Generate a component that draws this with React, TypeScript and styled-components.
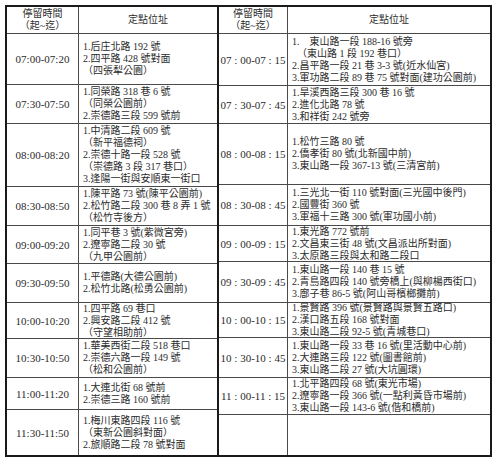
import styled, { createGlobalStyle } from 'styled-components'

type Stop = {
  time: string
  lines: string[]
}

const GlobalStyle = createGlobalStyle`
  html, body {
    margin: 0;
    padding: 0;
    background: #fff;
  }
  body {
    font-family: 'Liberation Serif', 'Noto Sans CJK TC', serif;
    color: #2b2b2b;
  }
`

const Page = styled.div`
  padding: 5px;
`

const Frame = styled.div`
  display: flex;
  width: 487px;
  box-sizing: border-box;
  border: 2px solid #1a1a1a;
`

const Side = styled.div<{ $cols: string; $rows: number[]; $divider?: boolean }>`
  display: grid;
  grid-template-columns: ${({ $cols }) => $cols};
  grid-template-rows: ${({ $rows }) => $rows.map(r => `${r}px`).join(' ')};
  gap: 1px;
  background: #4a4a4a;
  border-right: ${({ $divider }) => ($divider ? '2px solid #1a1a1a' : 'none')};
`

const Cell = styled.div`
  background: #fff;
  display: flex;
  flex-direction: column;
  justify-content: center;
  font-size: 10px;
  line-height: 12px;
  min-width: 0;
  white-space: nowrap;
`

const HeadCell = styled(Cell)`
  align-items: center;
  text-align: center;
`

const TimeCell = styled(Cell)`
  align-items: center;
  font-size: 11px;
`

const AddrCell = styled(Cell)`
  padding: 0 4px;
`

const Line = styled.div``

const leftStops: Stop[] = [
  { time: '07:00-07:20', lines: ['1.后庄北路 192 號', '2.四平路 428 號對面', '（四張犁公園）'] },
  { time: '07:30-07:50', lines: ['1.同榮路 318 巷 6 號', '（同榮公園前）', '2.崇德路三段 599 號前'] },
  {
    time: '08:00-08:20',
    lines: ['1.中清路二段 609 號', '（新平福德祠）', '2.崇德十路一段 528 號', '（崇德路 3 段 317 巷口）', '3.逢陽一街與安順東一街口'],
  },
  { time: '08:30-08:50', lines: ['1.陳平路 73 號(陳平公園前)', '2.松竹路二段 300 巷 8 弄 1 號', '（松竹寺後方）'] },
  { time: '09:00-09:20', lines: ['1.同平巷 3 號(紫微宮旁)', '2.遼寧路二段 30 號', '（九甲公園前）'] },
  { time: '09:30-09:50', lines: ['1.平德路(大德公園前)', '2.松竹北路(松勇公園前)'] },
  { time: '10:00-10:20', lines: ['1.四平路 69 巷口', '2.興安路二段 412 號', '（守望相助前）'] },
  { time: '10:30-10:50', lines: ['1.華美西街二段 518 巷口', '2.崇德六路一段 149 號', '（松和公園前）'] },
  { time: '11:00-11:20', lines: ['1.大連北街 68 號前', '2.崇德三路 160 號前'] },
  { time: '11:30-11:50', lines: ['1.梅川東路四段 116 號', '（東新公園斜對面）', '2.旅順路二段 78 號對面'] },
]

const rightStops: Stop[] = [
  {
    time: '07 : 00-07 : 15',
    lines: ['1.\u3000東山路一段 188-16 號旁', '\u2002（東山路 1 段 192 巷口）', '2.昌平路一段 21 巷 3-3 號(近水仙宮)', '3.軍功路二段 89 巷 75 號對面(建功公園前)'],
  },
  { time: '07 : 30-07 : 45', lines: ['1.旱溪西路三段 300 巷 16 號', '2.進化北路 78 號', '3.和祥街 242 號旁'] },
  { time: '08 : 00-08 : 15', lines: ['1.松竹三路 80 號', '2.僑孝街 80 號(北新國中前)', '3.東山路一段 367-13 號(三清宮前)'] },
  { time: '08 : 30-08 : 45', lines: ['1.三光北一街 110 號對面(三光國中後門)', '2.國豐街 360 號', '3.軍福十三路 300 號(軍功國小前)'] },
  { time: '09 : 00-09 : 15', lines: ['1.東光路 772 號前', '2.文昌東三街 48 號(文昌派出所對面)', '3.太原路三段與太和路二段口'] },
  { time: '09 : 30-09 : 45', lines: ['1.東山路一段 140 巷 15 號', '2.青島路四段 140 號旁橋上(與柳楊西街口)', '3.廍子巷 86-5 號(阿山哥檳榔攤前)'] },
  { time: '10 : 00-10 : 15', lines: ['1.景賢路 396 號(景賢路與景賢五路口)', '2.漢口路五段 168 號對面', '3.東山路二段 92-5 號(青城巷口)'] },
  { time: '10 : 30-10 : 45', lines: ['1.東山路一段 33 巷 16 號(里活動中心前)', '2.大連路三段 122 號(圖書館前)', '3.東山路二段 27 號(大坑圓環)'] },
  { time: '11 : 00-11 : 15', lines: ['1.北平路四段 68 號(東光市場)', '2.遼寧路一段 366 號(一點利黃昏市場前)', '3.東山路一段 143-6 號(偕和橋前)'] },
  { time: '', lines: [] },
]

// row heights measured off the scan; the two halves are separate tables
const leftRows = [26, 50, 38, 62, 38, 37, 38, 35, 38, 31, 45]
const rightRows = [26, 51, 37, 60, 40, 35, 40, 34, 39, 36, 40]

function Half({ stops, rows, cols, divider }: { stops: Stop[]; rows: number[]; cols: string; divider?: boolean }) {
  return (
    <Side $cols={cols} $rows={rows} $divider={divider}>
      <HeadCell>
        <Line>停留時間</Line>
        <Line>（起~迄）</Line>
      </HeadCell>
      <HeadCell>定點位址</HeadCell>
      {stops.map((s, i) => (
        <Row key={i} stop={s} />
      ))}
    </Side>
  )
}

function Row({ stop }: { stop: Stop }) {
  return (
    <>
      <TimeCell>{stop.time}</TimeCell>
      <AddrCell>
        {stop.lines.map((l, i) => (
          <Line key={i}>{l}</Line>
        ))}
      </AddrCell>
    </>
  )
}

export default function App() {
  return (
    <Page>
      <GlobalStyle />
      <Frame>
        <Half stops={leftStops} rows={leftRows} cols="71px 138px" divider />
        <Half stops={rightStops} rows={rightRows} cols="68px 202px" />
      </Frame>
    </Page>
  )
}
